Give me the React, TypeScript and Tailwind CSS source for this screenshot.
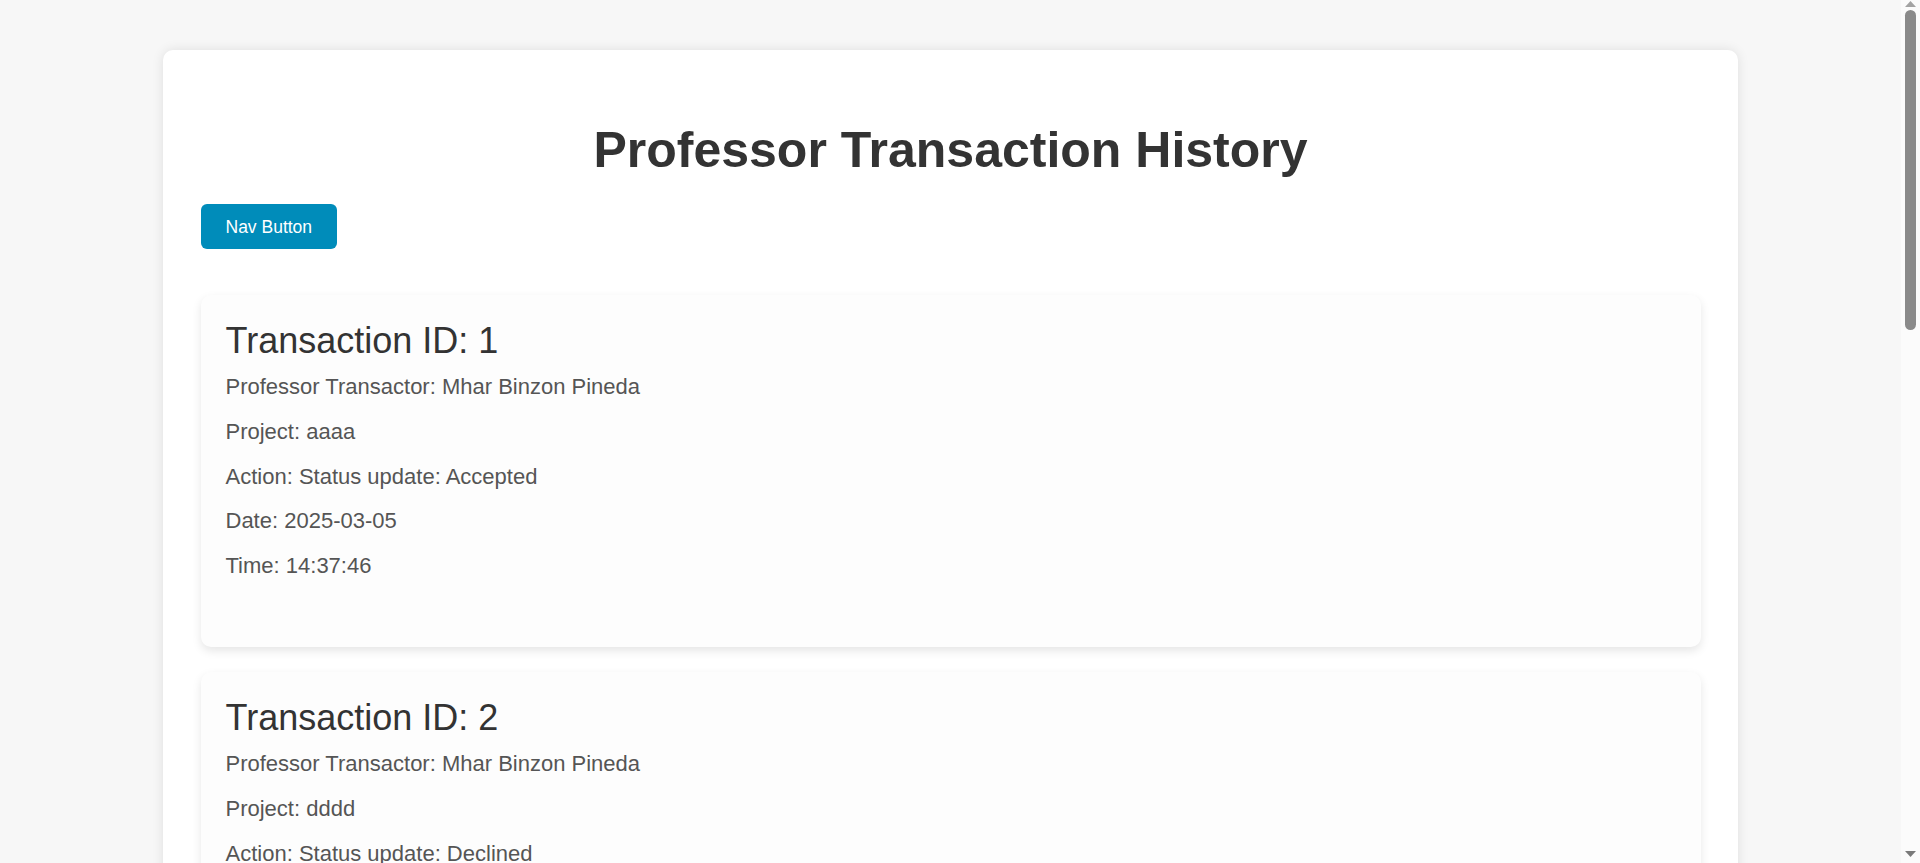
import React from 'react';

interface Transaction {
  id: number;
  professor: string;
  project: string;
  action: string;
  date: string;
  time: string;
}

const transactions: Transaction[] = [
  {
    id: 1,
    professor: 'Mhar Binzon Pineda',
    project: 'aaaa',
    action: 'Status update: Accepted',
    date: '2025-03-05',
    time: '14:37:46',
  },
  {
    id: 2,
    professor: 'Mhar Binzon Pineda',
    project: 'dddd',
    action: 'Status update: Declined',
    date: '2025-03-05',
    time: '14:38:02',
  },
  {
    id: 3,
    professor: 'Mhar Binzon Pineda',
    project: 'bbbb',
    action: 'Status update: Accepted',
    date: '2025-03-06',
    time: '09:12:15',
  },
];

function TransactionCard({ t }: { t: Transaction }) {
  return (
    <div className="rounded-[10px] bg-[#fdfdfd] px-[25px] pt-[25px] pb-[68.8px] shadow-[0_4px_10px_rgba(0,0,0,0.1)]">
      <h2 className="mb-[12.8px] text-[36px] leading-[41.4px] font-normal text-[#333]">Transaction ID: {t.id}</h2>
      <div className="flex flex-col gap-[19.75px] text-[22px] leading-[25px] text-[#555]">
        <p>Professor Transactor: {t.professor}</p>
        <p>Project: {t.project}</p>
        <p>Action: {t.action}</p>
        <p>Date: {t.date}</p>
        <p>Time: {t.time}</p>
      </div>
    </div>
  );
}

// browser scrollbar as seen in the screenshot
function Scrollbar() {
  return (
    <div className="fixed top-0 right-0 flex h-screen w-[19px] flex-col items-center bg-[#fbfbfb]">
      <svg width="11" height="6" viewBox="0 0 11 6" className="mt-[1px] text-[#a3a3a3]">
        <path d="M5.5 0L11 6H0z" fill="currentColor" />
      </svg>
      <div className="mt-[3px] h-[320px] w-[11px] rounded-full bg-[#8a8a8a]" />
      <div className="flex-1" />
      <svg width="11" height="6" viewBox="0 0 11 6" className="mb-[6px] text-[#7a7a7a]">
        <path d="M0 0H11L5.5 6z" fill="currentColor" />
      </svg>
    </div>
  );
}

export default function App() {
  return (
    <div
      className="min-h-screen bg-[#f7f7f7] pt-[50px] pr-[19px] pb-[50px]"
      style={{ fontFamily: '"Liberation Sans", Arial, sans-serif' }}
    >
      <div className="mx-auto w-[1575px] rounded-[10px] bg-white p-[37.5px] shadow-[0_0_12px_rgba(0,0,0,0.1)]">
        <h1 className="mt-[33px] mb-[25.5px] text-center text-[50px] leading-[58px] font-bold text-[#333]">
          Professor Transaction History
        </h1>
        <div className="flex">
          <button className="rounded-[6px] bg-[#008cba] px-[25px] py-[12.5px] text-[17.5px] leading-[20px] text-white">
            Nav Button
          </button>
        </div>
        <div className="mt-[46px] flex flex-col gap-[25px]">
          {transactions.map((t) => (
            <TransactionCard key={t.id} t={t} />
          ))}
        </div>
      </div>
      <Scrollbar />
    </div>
  );
}
